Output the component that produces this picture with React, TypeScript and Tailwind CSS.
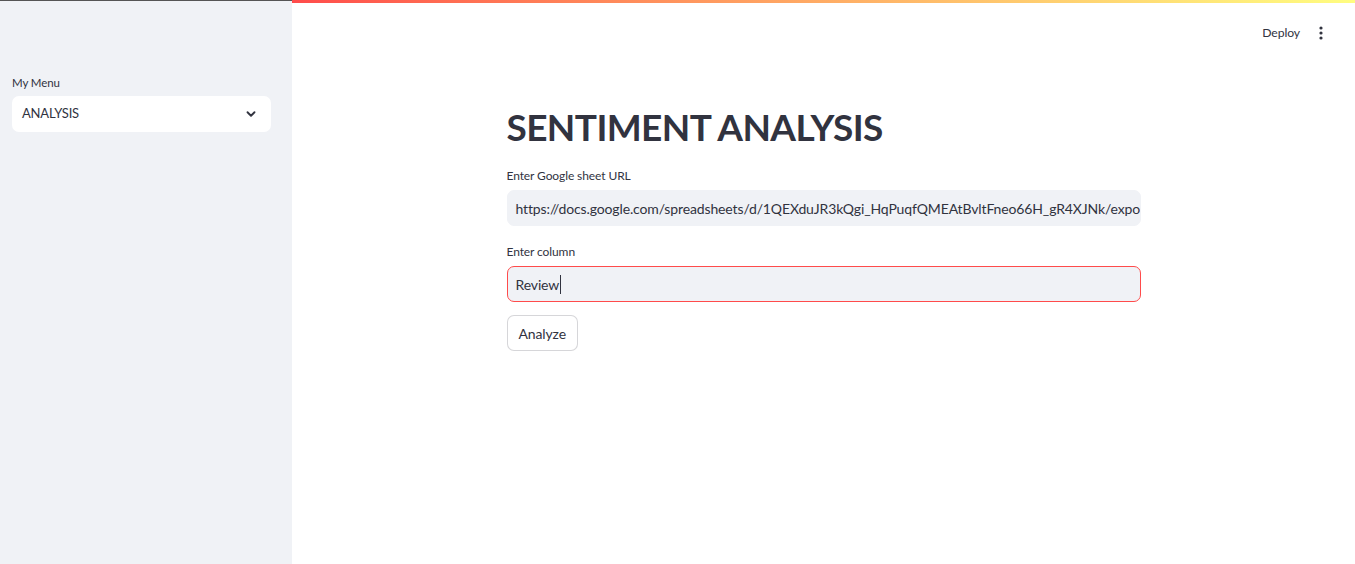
import React from 'react';

const font = { fontFamily: '"Source Sans Pro", Lato, "Noto Sans", sans-serif' };

const ChevronDown = () => (
  <svg width="14" height="14" viewBox="0 0 24 24" fill="none" stroke="#31333f" strokeWidth="3.2" strokeLinecap="round" strokeLinejoin="round">
    <path d="M6 9l6 6 6-6" />
  </svg>
);

const Kebab = () => (
  <svg width="4" height="14" viewBox="0 0 4 14" fill="#31333f">
    <circle cx="2" cy="2" r="1.6" />
    <circle cx="2" cy="7" r="1.6" />
    <circle cx="2" cy="12" r="1.6" />
  </svg>
);

export default function App() {
  return (
    <div className="flex h-[564px] w-full overflow-hidden bg-white text-[#31333f]" style={font}>
      <aside className="flex w-[292px] shrink-0 flex-col border-t border-[#555] bg-[#f0f2f6] pl-3 pr-[21px] pt-[74px]">
        <label className="mb-[5px] text-[11.5px] leading-[16px] tracking-[-0.1px] text-[#31333f]">My Menu</label>
        <div className="flex h-[36px] items-center justify-between rounded-[7px] bg-white pl-[10px] pr-[13px] text-[13px] tracking-[-0.2px]">
          <span>ANALYSIS</span>
          <ChevronDown />
        </div>
      </aside>

      <main className="flex min-w-0 flex-1 flex-col">
        <div className="h-[3px] w-full bg-gradient-to-r from-[#ff4b4b] to-[#fffd80]" />
        <header className="flex h-[60px] items-center justify-end gap-[19px] pr-[32px]">
          <span className="text-[12.2px] tracking-[-0.1px]">Deploy</span>
          <Kebab />
        </header>

        <div className="mx-auto flex w-[634px] flex-col pt-[42px]">
          <h1 className="text-[37px] font-bold leading-[1.2] tracking-[-0.6px]">SENTIMENT ANALYSIS</h1>

          <label className="mt-[19px] text-[12px] leading-[16px] tracking-[-0.1px]">Enter Google sheet URL</label>
          <div className="mt-[6px] flex h-[36px] items-center overflow-hidden rounded-[7px] border border-[#f0f2f6] bg-[#f0f2f6] px-[8px] text-[14px] tracking-[-0.13px]">
            <span className="whitespace-nowrap">https://docs.google.com/spreadsheets/d/1QEXduJR3kQgi_HqPuqfQMEAtBvltFneo66H_gR4XJNk/export?format=csv</span>
          </div>

          <label className="mt-[18px] text-[12px] leading-[16px] tracking-[-0.1px]">Enter column</label>
          <div className="mt-[6px] flex h-[36px] items-center rounded-[7px] border border-[#ff4b4b] bg-[#f0f2f6] px-[8px] text-[14px] tracking-[-0.13px]">
            <span>Review</span>
            <span className="ml-px inline-block h-[19px] w-px bg-[#31333f]" />
          </div>

          <div className="mt-[13px]">
            <button className="h-[36px] rounded-[7px] border border-[rgba(49,51,63,0.2)] bg-white px-[11px] text-[14px] tracking-[-0.13px]">
              Analyze
            </button>
          </div>
        </div>
      </main>
    </div>
  );
}
